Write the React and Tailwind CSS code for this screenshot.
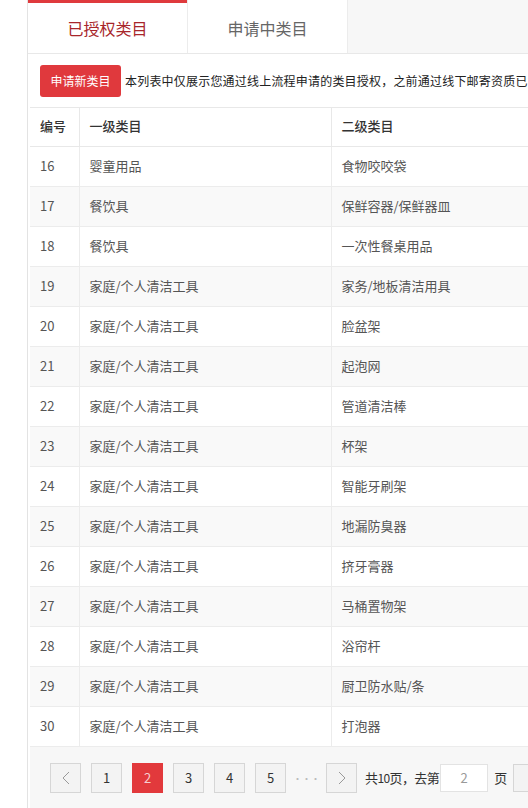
import React from "react";

const rows = [
    [16, "婴童用品", "食物咬咬袋"],
    [17, "餐饮具", "保鲜容器/保鲜器皿"],
    [18, "餐饮具", "一次性餐桌用品"],
    [19, "家庭/个人清洁工具", "家务/地板清洁用具"],
    [20, "家庭/个人清洁工具", "脸盆架"],
    [21, "家庭/个人清洁工具", "起泡网"],
    [22, "家庭/个人清洁工具", "管道清洁棒"],
    [23, "家庭/个人清洁工具", "杯架"],
    [24, "家庭/个人清洁工具", "智能牙刷架"],
    [25, "家庭/个人清洁工具", "地漏防臭器"],
    [26, "家庭/个人清洁工具", "挤牙膏器"],
    [27, "家庭/个人清洁工具", "马桶置物架"],
    [28, "家庭/个人清洁工具", "浴帘杆"],
    [29, "家庭/个人清洁工具", "厨卫防水贴/条"],
    [30, "家庭/个人清洁工具", "打泡器"],
];

function Arrow({ dir }) {
    return (
        <svg width="10" height="14" viewBox="0 0 10 14" fill="none">
            <path
                d={dir === "left" ? "M8 1 L2 7 L8 13" : "M2 1 L8 7 L2 13"}
                stroke="#999"
                strokeWidth="1"
            />
        </svg>
    );
}

function PageBox({ children, active }) {
    return (
        <div
            className={
                active
                    ? "shrink-0 w-[31px] h-[30px] flex items-center justify-center bg-[#e2393c] text-[#f5d0d0] text-[13px]"
                    : "shrink-0 w-[31px] h-[30px] flex items-center justify-center bg-[#f3f3f3] border border-[#d6d6d6] text-[#333] text-[13px]"
            }
        >
            {children}
        </div>
    );
}

export default function App() {
    return (
        <div className="min-h-screen bg-white pl-[27px] font-['Noto_Sans_CJK_SC',sans-serif] overflow-hidden">
            <div className="border-l border-[#e3e3e3] min-h-[808px] flex flex-col">
                {/* tabs */}
                <div className="h-[54px] flex bg-[#f7f7f7] border-b border-[#e8e8e8]">
                    <div className="w-[159px] bg-white border-t-[3px] border-[#df3a3d] flex items-center justify-center text-[16px] text-[#a8262b] pb-[1px]">
                        已授权类目
                    </div>
                    <div className="w-[161px] bg-white border-l border-r border-[#ececec] flex items-center justify-center text-[16px] text-[#666] pt-[2px]">
                        申请中类目
                    </div>
                </div>

                <div className="pl-[2px] flex-1 flex flex-col">
                    {/* toolbar */}
                    <div className="h-[53px] flex items-center pl-[10px] whitespace-nowrap">
                        <button className="shrink-0 w-[81px] h-[32px] rounded-[3px] bg-[#e0393d] text-white text-[12px] leading-none">
                            申请新类目
                        </button>
                        <span className="ml-[4px] text-[12px] text-[#222] tracking-[0.2px]">
                            本列表中仅展示您通过线上流程申请的类目授权，之前通过线下邮寄资质已申请的类目请联系客服查询
                        </span>
                    </div>

                    {/* table */}
                    <table className="table-fixed w-[760px] border-collapse text-[13px]">
                        <colgroup>
                            <col className="w-[49px]" />
                            <col className="w-[252px]" />
                            <col />
                        </colgroup>
                        <thead>
                            <tr className="h-[39px] border-t border-b border-[#e8e8e8] bg-white">
                                <th className="text-left font-medium text-[#333] pl-[10px] pb-[2px] border-r border-[#e8e8e8]">编号</th>
                                <th className="text-left font-medium text-[#333] pl-[10px] pb-[2px] border-r border-[#e8e8e8]">一级类目</th>
                                <th className="text-left font-medium text-[#333] pl-[10px] pb-[2px]">二级类目</th>
                            </tr>
                        </thead>
                        <tbody>
                            {rows.map(([id, a, b], i) => (
                                <tr
                                    key={id}
                                    className={
                                        i % 2 === 1
                                            ? "h-[40px] border-b border-[#ececec] bg-[#f9f9f9]"
                                            : "h-[40px] border-b border-[#ececec] bg-white"
                                    }
                                >
                                    <td className="pl-[10px] pb-[2px] text-[#555] border-r border-[#ececec]">{id}</td>
                                    <td className="pl-[10px] pb-[2px] text-[#555] border-r border-[#ececec]">{a}</td>
                                    <td className="pl-[10px] pb-[2px] text-[#555]">{b}</td>
                                </tr>
                            ))}
                        </tbody>
                    </table>

                    {/* pagination */}
                    <div className="flex-1 bg-[#f7f7f7] pt-[16px] pl-[20px] flex items-start gap-[10px] whitespace-nowrap">
                        <PageBox><Arrow dir="left" /></PageBox>
                        <PageBox>1</PageBox>
                        <PageBox active>2</PageBox>
                        <PageBox>3</PageBox>
                        <PageBox>4</PageBox>
                        <PageBox>5</PageBox>
                        <div className="shrink-0 w-[20px] h-[30px] flex items-center justify-center text-[#bbb] text-[10px] tracking-[-1px]">···</div>
                        <PageBox><Arrow dir="right" /></PageBox>
                        <div className="shrink-0 h-[30px] flex items-center text-[13px] text-[#333] -ml-[2px]">
                            <span className="tracking-[-0.6px]">共<span className="text-[12px]">10</span>页，去第</span>
                            <div className="shrink-0 ml-[1px] w-[48px] h-[28px] bg-white border border-[#e3e3e3] flex items-center justify-center text-[#999]">2</div>
                            <span className="ml-[6px]">页</span>
                            <div className="shrink-0 ml-[6px] w-[40px] h-[28px] bg-[#f3f3f3] border border-[#d6d6d6]" />
                        </div>
                    </div>
                </div>
            </div>
        </div>
    );
}
